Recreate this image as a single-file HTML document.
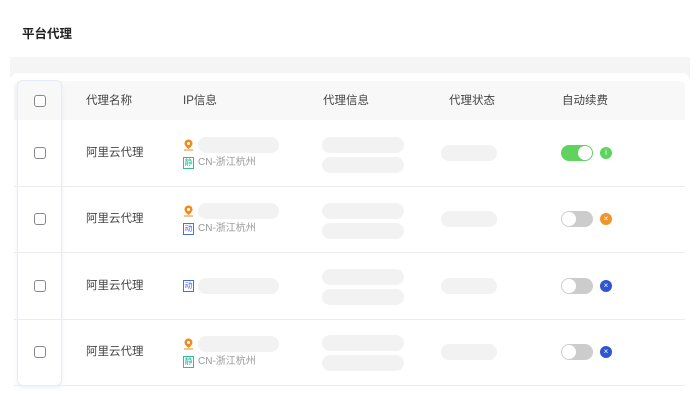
<!DOCTYPE html>
<html><head><meta charset="utf-8"><style>
*{margin:0;padding:0;box-sizing:border-box}
body{width:700px;height:402px;background:#fff;position:relative;overflow:hidden;font-family:"Liberation Sans","Noto Sans CJK SC",sans-serif;color:#444}
.a{position:absolute}
.t{font-size:11.5px;white-space:nowrap;line-height:14px}
.pill{position:absolute;background:#f2f2f2;border-radius:8px;height:16px}
.cb{position:absolute;width:12px;height:12px;border:1.3px solid #888;border-radius:3px;background:#fff}
.line{position:absolute;left:14px;width:671px;height:1px;background:#ececec}
.tg{position:absolute;width:32px;height:16px;border-radius:8px;background:#ccc}
.tg i{position:absolute;top:1px;width:14px;height:14px;border-radius:50%;background:#fff}
.dot{position:absolute;width:12px;height:12px;border-radius:50%;color:#fff;font-size:8px;line-height:12px;text-align:center}
.bd{position:absolute;width:11px;height:12px;border:1px solid;font-size:8px;line-height:10px;text-align:center;font-family:"Noto Sans CJK SC",sans-serif}
.reg{position:absolute;font-size:10px;color:#999;line-height:12px}
</style></head><body>
<div class="a t" style="left:22px;top:27px;font-size:12.5px;font-weight:bold;color:#222">平台代理</div>
<div class="a" style="left:10px;top:57px;width:680px;height:30px;background:#f5f5f5"></div>
<div class="a" style="left:10px;top:73px;width:680px;height:329px;background:#fff;border-radius:8px 8px 0 0"></div>
<div class="a" style="left:14px;top:81px;width:671px;height:39px;background:#f8f8f8;border-radius:6px 6px 0 0"></div>
<div class="a" style="left:17px;top:80px;width:45px;height:306px;border:1px solid #e6ebfa;border-radius:6px;box-shadow:0 2px 4px rgba(200,210,240,.3)"></div>
<div class="line" style="top:186px"></div>
<div class="line" style="top:252px"></div>
<div class="line" style="top:319px"></div>
<div class="line" style="top:385px"></div>

<div class="cb" style="left:34px;top:95px"></div>
<div class="a t" style="left:86px;top:94px">代理名称</div>
<div class="a t" style="left:183px;top:94px">IP信息</div>
<div class="a t" style="left:323px;top:94px">代理信息</div>
<div class="a t" style="left:449px;top:94px">代理状态</div>
<div class="a t" style="left:562px;top:94px">自动续费</div>

<div class="cb" style="left:34px;top:147px"></div>
<div class="a t" style="left:86px;top:146px">阿里云代理</div>
<svg class="a" style="left:183px;top:139px" width="11" height="12" viewBox="0 0 11 12"><path d="M5.5 0.5a4 4 0 0 0-4 4c0 2.5 4 5.5 4 5.5s4-3 4-5.5a4 4 0 0 0-4-4z" fill="#f08a1c"/><circle cx="5.5" cy="4.5" r="1.5" fill="#fff"/><path d="M1 11h9" stroke="#f08a1c" stroke-width="1"/></svg>
<div class="pill" style="left:198px;top:137px;width:81px"></div>
<div class="bd" style="left:183px;top:157px;border-color:#2ebd9a;color:#2ebd9a">静</div>
<div class="reg" style="left:198px;top:157px">CN-浙江杭州</div>
<div class="pill" style="left:322px;top:137px;width:82px"></div>
<div class="pill" style="left:322px;top:157px;width:82px"></div>
<div class="pill" style="left:441px;top:145px;width:56px"></div>
<div class="tg" style="left:561px;top:145px;background:#5fd35d"><i style="left:17px"></i></div>
<div class="dot" style="left:600px;top:147px;background:#5fd35d">i</div>

<div class="cb" style="left:34px;top:213px"></div>
<div class="a t" style="left:86px;top:212px">阿里云代理</div>
<svg class="a" style="left:183px;top:205px" width="11" height="12" viewBox="0 0 11 12"><path d="M5.5 0.5a4 4 0 0 0-4 4c0 2.5 4 5.5 4 5.5s4-3 4-5.5a4 4 0 0 0-4-4z" fill="#f08a1c"/><circle cx="5.5" cy="4.5" r="1.5" fill="#fff"/><path d="M1 11h9" stroke="#f08a1c" stroke-width="1"/></svg>
<div class="pill" style="left:198px;top:203px;width:81px"></div>
<div class="bd" style="left:183px;top:223px;border-color:#4a6ee0;color:#4a6ee0">动</div>
<div class="reg" style="left:198px;top:223px">CN-浙江杭州</div>
<div class="pill" style="left:322px;top:203px;width:82px"></div>
<div class="pill" style="left:322px;top:223px;width:82px"></div>
<div class="pill" style="left:441px;top:211px;width:56px"></div>
<div class="tg" style="left:561px;top:211px"><i style="left:1px"></i></div>
<div class="dot" style="left:600px;top:213px;background:#f0952c">×</div>

<div class="cb" style="left:34px;top:280px"></div>
<div class="a t" style="left:86px;top:279px">阿里云代理</div>
<div class="bd" style="left:183px;top:280px;border-color:#4a6ee0;color:#4a6ee0">动</div>
<div class="pill" style="left:198px;top:278px;width:81px"></div>
<div class="pill" style="left:322px;top:269px;width:82px"></div>
<div class="pill" style="left:322px;top:289px;width:82px"></div>
<div class="pill" style="left:441px;top:278px;width:56px"></div>
<div class="tg" style="left:561px;top:278px"><i style="left:1px"></i></div>
<div class="dot" style="left:600px;top:280px;background:#2f55d4">×</div>

<div class="cb" style="left:34px;top:346px"></div>
<div class="a t" style="left:86px;top:345px">阿里云代理</div>
<svg class="a" style="left:183px;top:338px" width="11" height="12" viewBox="0 0 11 12"><path d="M5.5 0.5a4 4 0 0 0-4 4c0 2.5 4 5.5 4 5.5s4-3 4-5.5a4 4 0 0 0-4-4z" fill="#f08a1c"/><circle cx="5.5" cy="4.5" r="1.5" fill="#fff"/><path d="M1 11h9" stroke="#f08a1c" stroke-width="1"/></svg>
<div class="pill" style="left:198px;top:336px;width:81px"></div>
<div class="bd" style="left:183px;top:356px;border-color:#2ebd9a;color:#2ebd9a">静</div>
<div class="reg" style="left:198px;top:356px">CN-浙江杭州</div>
<div class="pill" style="left:322px;top:335px;width:82px"></div>
<div class="pill" style="left:322px;top:355px;width:82px"></div>
<div class="pill" style="left:441px;top:344px;width:56px"></div>
<div class="tg" style="left:561px;top:344px"><i style="left:1px"></i></div>
<div class="dot" style="left:600px;top:346px;background:#2f55d4">×</div>
</body></html>
